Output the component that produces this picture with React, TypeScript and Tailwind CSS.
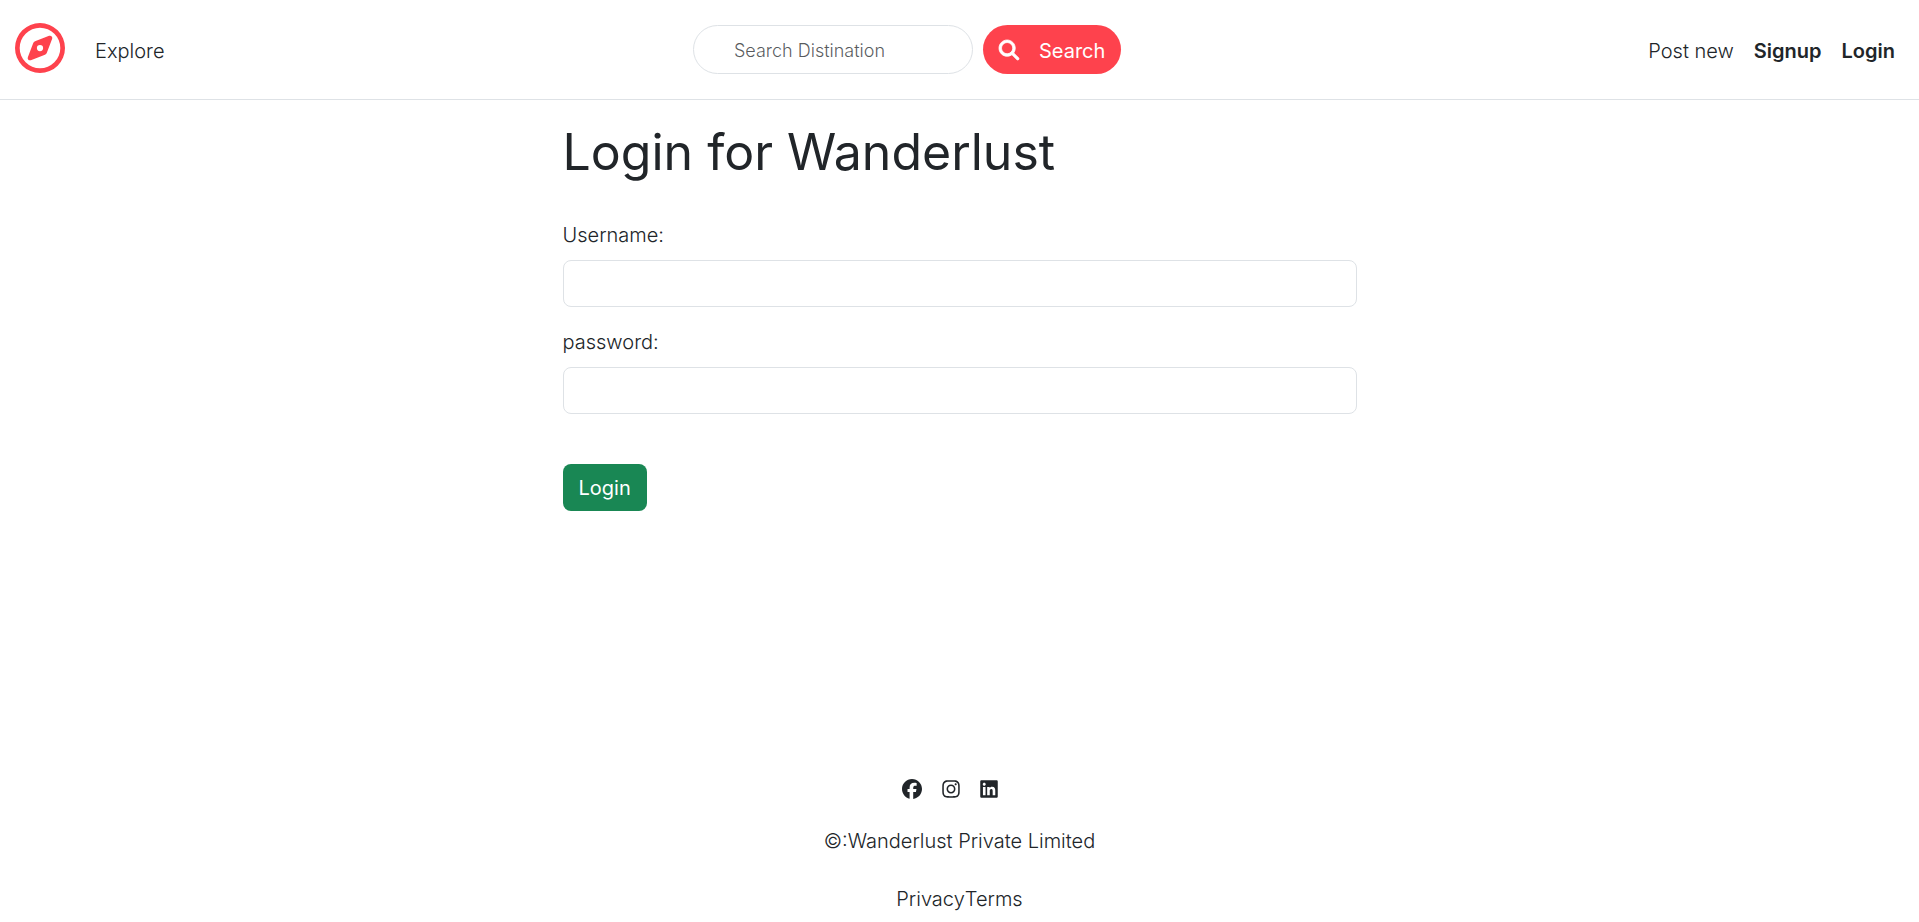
import React from "react";
import {
  FaFacebook,
  FaInstagram,
  FaLinkedin,
  FaMagnifyingGlass,
  FaRegCompass,
} from "react-icons/fa6";

function Navbar() {
  return (
    <header className="border-b border-[#dee2e6] bg-white">
      <nav className="flex h-[99px] items-center pr-6 pl-[15px]">
        <div className="flex flex-1 items-center gap-[30px]">
          <a href="#" aria-label="Wanderlust" className="pb-[3px] text-[#fe424d]">
            <FaRegCompass size={50} />
          </a>
          <a href="#" className="pt-0.5">Explore</a>
        </div>
        <form role="search" className="flex items-center gap-2.5" onSubmit={(e) => e.preventDefault()}>
          <input
            type="search"
            aria-label="Search Distination"
            placeholder="Search Distination"
            className="h-[49px] w-[280px] rounded-full border border-[#dee2e6] px-10 pt-0.5 text-[18px] outline-none placeholder:text-[#212529]/75"
          />
          <button
            type="submit"
            className="flex h-[49px] w-[138px] items-center gap-5 rounded-full bg-[#fe424d] pl-4 font-normal text-white"
          >
            <FaMagnifyingGlass size={20} className="shrink-0 overflow-visible stroke-current stroke-[20]" />
            <span className="pt-0.5">Search</span>
          </button>
        </form>
        <div className="flex flex-1 justify-end gap-5 pt-0.5 pl-24">
          <a href="#">Post new</a>
          <a href="#" className="font-semibold">Signup</a>
          <a href="#" className="font-semibold">Login</a>
        </div>
      </nav>
    </header>
  );
}

function Field({ id, label, type }: { id: string; label: string; type: string }) {
  return (
    <div className="mb-5">
      <label htmlFor={id} className="mb-2.5 block leading-[30px]">
        {label}
      </label>
      <input
        id={id}
        type={type}
        className="block h-[47px] w-full rounded-lg border border-[#dee2e6] px-4 outline-none focus:border-[#86b7fe]"
      />
    </div>
  );
}

function LoginForm() {
  return (
    <main className="mx-auto w-full max-w-[794px]">
      <h1 className="pt-[22px] pb-7 text-[50px] leading-[60px] font-normal">Login for Wanderlust</h1>
      <form className="pt-[10px]" onSubmit={(e) => e.preventDefault()}>
        <Field id="username" label="Username:" type="text" />
        <Field id="password" label="password:" type="password" />
        <button
          type="submit"
          className="mt-[30px] h-[47px] rounded-lg bg-[#198754] px-4 font-normal text-white"
        >
          Login
        </button>
      </form>
    </main>
  );
}

function Footer() {
  return (
    <footer className="mt-auto flex flex-col items-center pb-2 leading-[30px]">
      <div className="mb-[22px] flex h-[30px] items-center">
        <a href="#" aria-label="Facebook" className="pr-5"><FaFacebook size={20} /></a>
        <a href="#" aria-label="Instagram" className="pr-5"><FaInstagram className="h-5 w-[18px]" /></a>
        <a href="#" aria-label="LinkedIn" className="pr-5"><FaLinkedin className="h-5 w-[18px]" /></a>
      </div>
      <div className="mb-7">©:Wanderlust Private Limited</div>
      <div className="flex">
        <a href="#">Privacy</a>
        <a href="#">Terms</a>
      </div>
    </footer>
  );
}

export default function App() {
  return (
    <div className="flex min-h-screen flex-col bg-white font-['Inter',sans-serif] text-[20px] leading-[30px] font-light text-[#212529]">
      <Navbar />
      <LoginForm />
      <Footer />
    </div>
  );
}
